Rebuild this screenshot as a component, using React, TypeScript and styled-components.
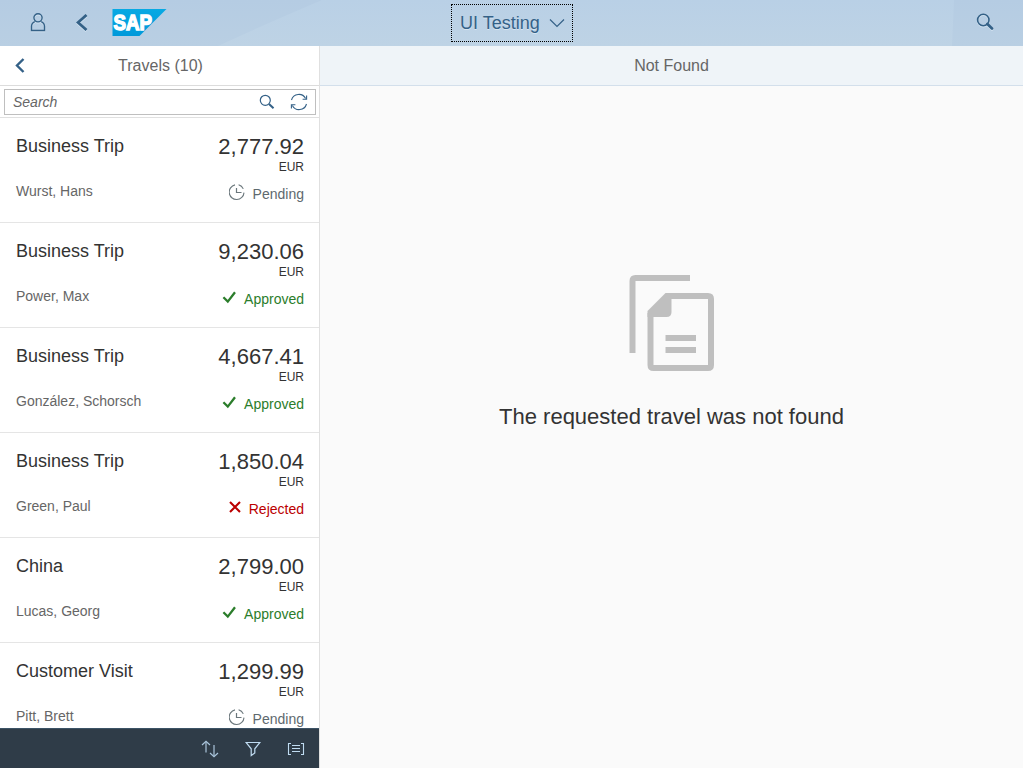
import React from 'react';
import styled, { createGlobalStyle } from 'styled-components';

const Global = createGlobalStyle`
  * { box-sizing: border-box; }
  body { margin: 0; font-family: "Liberation Sans", Arial, sans-serif; overflow: hidden; }
`;

const Page = styled.div`
  display: flex;
  flex-direction: column;
  height: 768px;
  overflow: hidden;
  background: #fafafa;
`;

const Shell = styled.header`
  position: relative;
  display: grid;
  grid-template-columns: 1fr auto 1fr;
  align-items: center;
  flex: none;
  height: 46px;
  background: linear-gradient(#b5cce3, #b9cfe3);
  color: #346187;
`;

const Backdrop = styled.svg`
  position: absolute;
  inset: 0;
`;

const ShellLeft = styled.div`
  position: relative;
  display: flex;
  align-items: center;
  gap: 29px;
  height: 46px;
  padding-left: 29px;
  margin-top: -1px;

  svg { display: block; filter: drop-shadow(0 1px 0 #d2e2f0); }
`;

const Logo = styled.div`
  margin: 0 0 0 -6px;
  && svg { filter: none; }
`;

const ShellTitle = styled.button`
  position: relative;
  display: flex;
  align-items: center;
  justify-content: space-between;
  width: 122px;
  height: 38px;
  padding: 0 7px 0 8px;
  margin-left: 1px;
  border: 1px dotted #000;
  background: none;
  color: #346187;
  font: 18px "Liberation Sans", Arial, sans-serif;
  text-shadow: 0 1px 0 #d6e5f2;
  white-space: nowrap;
`;

const ShellRight = styled.div`
  position: relative;
  display: flex;
  justify-content: flex-end;
  padding-right: 29px;
  margin-top: -2px;
  svg { display: block; filter: drop-shadow(0 1px 0 #d2e2f0); }
`;

const Body = styled.div`
  display: flex;
  flex: 1;
  min-height: 0;
`;

const Master = styled.aside`
  display: flex;
  flex-direction: column;
  width: 320px;
  border-right: 1px solid #e0e0e0;
  background: #fff;
`;

const MasterBar = styled.div`
  display: grid;
  grid-template-columns: 41px 1fr 39px;
  align-items: center;
  flex: none;
  height: 40px;
  border-bottom: 1px solid #dcdcdc;
  color: #346187;
  svg { margin: 0 0 0 15px; display: block; }
`;

const BarTitle = styled.h1`
  margin: 0;
  color: #666;
  font-size: 16px;
  font-weight: normal;
  line-height: 39px;
  text-align: center;
`;

const SearchRow = styled.div`
  flex: none;
  height: 32px;
  padding: 3px 3px 2px 4px;
  border-bottom: 1px solid #e0e0e0;
`;

const SearchBox = styled.div`
  display: flex;
  align-items: center;
  height: 26px;
  padding: 0 7px 0 8px;
  border: 1px solid #bfbfbf;
  color: #666;
  font-size: 14px;
  font-style: italic;
  span { flex: 1; }
  svg { margin-left: 15px; }
`;

const List = styled.ul`
  flex: 1;
  min-height: 0;
  margin: 0;
  padding: 0;
  overflow: hidden;
  list-style: none;
`;

const Item = styled.li`
  display: flex;
  justify-content: space-between;
  height: 105px;
  padding: 16px 15px 0 16px;
  border-bottom: 1px solid #e5e5e5;
`;

const ItemText = styled.div`
  display: flex;
  flex-direction: column;
`;

const ItemTitle = styled.div`
  color: #333;
  font-size: 18px;
  line-height: 24px;
`;

const Person = styled.div`
  margin-top: 23px;
  color: #666;
  font-size: 14px;
  line-height: 20px;
`;

const ItemFigures = styled.div`
  display: flex;
  flex-direction: column;
  align-items: flex-end;
  padding-top: 1px;
`;

const Amount = styled.div`
  color: #333;
  font-size: 22px;
  line-height: 24px;
`;

const Currency = styled.div`
  color: #333;
  font-size: 12px;
  line-height: 17px;
`;

const tones = { Pending: '#5e696e', Approved: '#2b7d2b', Rejected: '#bb0000' };
type State = keyof typeof tones;

const Status = styled.div<{ $state: State }>`
  display: flex;
  align-items: center;
  gap: 7px;
  margin-top: 8px;
  color: ${p => tones[p.$state]};
  font-size: 14px;
  line-height: 20px;
  svg { display: block; position: relative; top: -2px; }
`;

const Footer = styled.footer`
  display: flex;
  align-items: center;
  justify-content: flex-end;
  gap: 25px;
  flex: none;
  height: 40px;
  padding: 1px 14px 0 0;
  border-top: 1px solid #3c5366;
  background: #2f3c48;
`;

const Detail = styled.main`
  flex: 1;
  display: flex;
  flex-direction: column;
`;

const DetailBar = styled.div`
  height: 40px;
  border-bottom: 1px solid #d3dfeb;
  background: #eff4f8;
`;

const Message = styled.div`
  display: flex;
  flex-direction: column;
  align-items: center;
  padding-top: 189px;
  color: #333;
  font-size: 22px;
  line-height: 26px;
  svg { display: block; margin-bottom: 33px; }
`;

const Chevron = ({ w, h, s }: { w: number; h: number; s: number }) => (
  <svg width={w} height={h} viewBox={`0 0 ${w} ${h}`} fill="none" stroke="#346187" strokeWidth={s}>
    <path d={`M${w - 1.5} 1 L2 ${h / 2} L${w - 1.5} ${h - 1}`} />
  </svg>
);

const StatusIcon = ({ state }: { state: State }) => {
  if (state === 'Approved')
    return (
      <svg width="15" height="13" fill="none" stroke="#2b7d2b" strokeWidth="2.3">
        <path d="M1.4 6.3 L5.8 10.6 L13 1.3" />
      </svg>
    );
  if (state === 'Rejected')
    return (
      <svg width="13" height="12" fill="none" stroke="#bb0000" strokeWidth="2.1">
        <path d="M1 1 L11 11 M11 1 L1 11" />
      </svg>
    );
  return (
    <svg width="17" height="17" fill="none" stroke="#6b777c" strokeWidth="1.1">
      <path d="M9.6 .8 A7.4 7.4 0 0 1 14.3 4.9 M15 8.6 A7.4 7.4 0 1 1 6 .9" />
      <path d="M7.5 4 V8.5 H12.5" strokeWidth="1.2" />
    </svg>
  );
};

const trips: [string, string, string, State][] = [
  ['Business Trip', 'Wurst, Hans', '2,777.92', 'Pending'],
  ['Business Trip', 'Power, Max', '9,230.06', 'Approved'],
  ['Business Trip', 'González, Schorsch', '4,667.41', 'Approved'],
  ['Business Trip', 'Green, Paul', '1,850.04', 'Rejected'],
  ['China', 'Lucas, Georg', '2,799.00', 'Approved'],
  ['Customer Visit', 'Pitt, Brett', '1,299.99', 'Pending'],
];

export default function App() {
  return (
    <>
      <Global />
      <Page>
        <Shell>
          <Backdrop width="1023" height="46">
            <defs>
              <linearGradient id="sheen" x1="0" y1="0" x2="0" y2="1">
                <stop offset="0" stopColor="#b9d0e6" />
                <stop offset="1" stopColor="#bed3e5" />
              </linearGradient>
            </defs>
            <path d="M322 0 H954 L952 46 H218 Q270 22 322 0Z" fill="url(#sheen)" />
          </Backdrop>
          <ShellLeft>
            <svg width="18" height="20" fill="none" stroke="#346187" strokeWidth="1.4">
              <circle cx="9" cy="4.8" r="4.1" />
              <path d="M5.8 8.600 C3.4 9.600 2.5 11 2.5 13.500 V17.500 H15.5 V13.500 C15.5 11 14.6 9.600 12.2 8.600" />
            </svg>
            <Chevron w={12} h={17} s={2.8} />
            <Logo>
              <svg width="57" height="28">
                <defs>
                  <linearGradient id="sap" x1="0" y1="0" x2="0" y2="1">
                    <stop offset="0" stopColor="#08a9e3" />
                    <stop offset="1" stopColor="#0099da" />
                  </linearGradient>
                </defs>
                <path d="M1.500 0 H55.500 L28.500 27 H1.500Z" fill="url(#sap)" />
                <text x="2.6" y="21.2" textLength="38.5" lengthAdjust="spacingAndGlyphs" fill="#fff" stroke="#fff" strokeWidth="1.5" fontFamily="Liberation Sans" fontWeight="bold" fontSize="22">SAP</text>
              </svg>
            </Logo>
          </ShellLeft>
          <ShellTitle>
            UI Testing
            <svg width="16" height="10" fill="none" stroke="#346187" strokeWidth="1.2">
              <path d="M1 1.5 L8 8.5 L15 1.5" />
            </svg>
          </ShellTitle>
          <ShellRight>
            <svg width="18" height="18" fill="none" stroke="#346187">
              <circle cx="7.3" cy="7" r="5.7" strokeWidth="1.6" />
              <path d="M11.4 11 L16 15.5" strokeWidth="2.7" strokeLinecap="round" />
            </svg>
          </ShellRight>
        </Shell>
        <Body>
          <Master>
            <MasterBar>
              <Chevron w={10} h={15} s={2.4} />
              <BarTitle>Travels (10)</BarTitle>
            </MasterBar>
            <SearchRow>
              <SearchBox>
                <span>Search</span>
                <svg width="16" height="16" fill="none" stroke="#346187">
                  <circle cx="6.3" cy="6.3" r="5" strokeWidth="1.2" />
                  <path d="M10 10 L14.5 14.3" strokeWidth="2" />
                </svg>
                <svg width="18" height="18" fill="none" stroke="#346187" strokeWidth="1.1">
                  <path d="M1.5 7 A7.6 7.6 0 0 1 15.6 5.6 M16.5 11 A7.6 7.6 0 0 1 2.4 12.4" />
                  <path d="M16.6 2.6 V6.3 H12.6 M1.4 15.4 V11.7 H5.4" />
                </svg>
              </SearchBox>
            </SearchRow>
            <List>
              {trips.map(([title, person, amount, state]) => (
                <Item key={person}>
                  <ItemText>
                    <ItemTitle>{title}</ItemTitle>
                    <Person>{person}</Person>
                  </ItemText>
                  <ItemFigures>
                    <Amount>{amount}</Amount>
                    <Currency>EUR</Currency>
                    <Status $state={state}>
                      <StatusIcon state={state} />
                      {state}
                    </Status>
                  </ItemFigures>
                </Item>
              ))}
            </List>
            <Footer>
              <svg width="18" height="18" fill="none">
                <path d="M5 12.500 V2 M13 5 V16" stroke="#8297a9" strokeWidth="1.8" />
                <path d="M1 5 L5 1.300 L9 5 M9 13 L13 16.700 L17 13" stroke="#a9c5dc" strokeWidth="1.2" />
              </svg>
              <svg width="18" height="18" fill="none" stroke="#c0dcf2" strokeWidth="1.2">
                <path d="M2.2 2.5 H15.8 L10.8 8.8 V13 L7.2 15.5 V8.8 Z" />
              </svg>
              <svg width="18" height="18" fill="none" stroke="#c0dcf2" strokeWidth="1.1">
                <path d="M4 3.500 H1.500 V14.500 H4 M14 3.500 H16.500 V14.500 H14 M5 5.500 H13 M5 8.500 H13 M5 11.500 H13" />
              </svg>
            </Footer>
          </Master>
          <Detail>
            <DetailBar>
              <BarTitle>Not Found</BarTitle>
            </DetailBar>
            <Message>
              <svg width="86" height="96" fill="none" stroke="#bfbfbf" strokeWidth="6">
                <path d="M3.500 78 V6 Q3.500 3 6.500 3 H61" />
                <path d="M38.500 21 H79 Q82 21 82 24 V90 Q82 93 79 93 H24.500 Q21.500 93 21.500 90 V38" />
                <path d="M18.500 42 V36 L36.500 18 H42.500 V37 Q42.500 42 37.500 42 Z" fill="#bfbfbf" stroke="none" />
                <path d="M36.500 63 H67 M36.500 75 H67" />
              </svg>
              The requested travel was not found
            </Message>
          </Detail>
        </Body>
      </Page>
    </>
  );
}
